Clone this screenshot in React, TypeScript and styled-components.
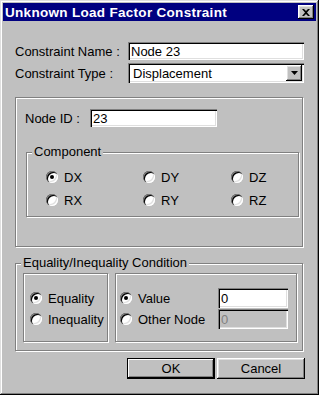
import React from 'react'
import styled, { createGlobalStyle } from 'styled-components'

const GlobalStyle = createGlobalStyle`
  html, body {
    margin: 0;
    padding: 0;
    background: #c0c0c0;
  }
  body {
    font-family: 'Liberation Sans', Arial, sans-serif;
    font-size: 13px;
    color: #000;
  }
`

const raised = `
  box-shadow: inset -1px -1px 0 #000, inset 1px 1px 0 #fff,
    inset -2px -2px 0 #808080, inset 2px 2px 0 #dfdfdf;
`

const sunken = `
  box-shadow: inset 1px 1px 0 #808080, inset 2px 2px 0 #000,
    inset -1px -1px 0 #fff, inset -2px -2px 0 #dfdfdf;
`

const etched = `
  border: 1px solid #808080;
  box-shadow: inset 1px 1px 0 #fff, 1px 1px 0 #fff;
`

const Window = styled.div`
  box-sizing: border-box;
  width: 319px;
  height: 395px;
  padding: 3px;
  background: #c0c0c0;
  box-shadow: inset -1px -1px 0 #000, inset 1px 1px 0 #dfdfdf,
    inset -2px -2px 0 #808080, inset 2px 2px 0 #fff;
  display: flex;
  flex-direction: column;
`

const TitleBar = styled.div`
  height: 18px;
  background: #000080;
  color: #fff;
  display: flex;
  align-items: center;
  padding: 0 2px;
  font-weight: bold;
  font-size: 13.5px;
  letter-spacing: 0.3px;
`

const CloseButton = styled.div`
  margin-left: auto;
  width: 16px;
  height: 14px;
  background: #c0c0c0;
  display: flex;
  align-items: center;
  justify-content: center;
  ${raised}
`

const Form = styled.div`
  padding: 21px 12px 0;
  display: flex;
  flex-direction: column;
`

const FieldGrid = styled.div`
  display: grid;
  grid-template-columns: 113px 1fr;
  row-gap: 3px;
  align-items: center;
`

const Label = styled.span`
  white-space: nowrap;
`

const TextBox = styled.input<{ $width?: number; $height?: number }>`
  box-sizing: border-box;
  width: ${(p) => (p.$width ? `${p.$width}px` : '100%')};
  height: ${(p) => p.$height ?? 18}px;
  border: none;
  outline: none;
  margin: 0;
  padding: 0 3px;
  font: inherit;
  color: #000;
  background: #fff;
  ${sunken}

  &:disabled {
    background: #c0c0c0;
    color: #808080;
  }
`

const Select = styled.div`
  box-sizing: border-box;
  height: 20px;
  background: #fff;
  display: flex;
  align-items: center;
  padding: 2px 2px 2px 5px;
  ${sunken}
`

const SelectText = styled.span`
  flex: 1;
`

const ArrowButton = styled.div`
  width: 16px;
  height: 16px;
  background: #c0c0c0;
  display: flex;
  align-items: center;
  justify-content: center;
  ${raised}
`

const Panel = styled.div`
  box-sizing: border-box;
  width: 288px;
  margin-top: 14px;
  padding: 11px 0 29px 9px;
  ${etched}
`

const NodeRow = styled.div`
  display: flex;
  align-items: center;
`

const NodeLabel = styled.span`
  width: 65px;
`

const Group = styled.div<{ $width: number }>`
  position: relative;
  box-sizing: border-box;
  width: ${(p) => p.$width}px;
  ${etched}
`

const Legend = styled.span`
  position: absolute;
  top: -8px;
  left: 5px;
  padding: 0 2px;
  line-height: 14px;
  background: #c0c0c0;
  white-space: nowrap;
`

const ComponentGroup = styled(Group)`
  margin: 25px 0 0 1px;
  padding: 17px 0 9px 19px;
  display: grid;
  grid-template-columns: 97px 88px 1fr;
  row-gap: 9px;
`

const ConditionGroup = styled(Group)`
  margin-top: 16px;
  padding: 9px 0 8px 7px;
  display: flex;
  gap: 7px;
`

const InnerBox = styled.div<{ $width: number; $padLeft: number }>`
  box-sizing: border-box;
  width: ${(p) => p.$width}px;
  height: 69px;
  padding: 14px 0 0 ${(p) => p.$padLeft}px;
  display: grid;
  grid-auto-rows: 20px;
  row-gap: 1px;
  ${etched}
`

const ValueRow = styled.div`
  display: grid;
  grid-template-columns: 98px 70px;
  align-items: center;
`

const RadioItem = styled.label`
  height: 14px;
  display: flex;
  align-items: center;
  gap: 6px;
  white-space: nowrap;
`

const RadioDot = styled.span<{ $checked?: boolean }>`
  position: relative;
  flex: none;
  width: 12px;
  height: 12px;
  border-radius: 50%;
  background: #fff;
  box-shadow: inset 1px 1px 0 #808080, inset 2px 2px 0 #000,
    inset -1px -1px 0 #fff, inset -2px -2px 0 #dfdfdf;

  &::after {
    content: '';
    display: ${(p) => (p.$checked ? 'block' : 'none')};
    position: absolute;
    left: 4px;
    top: 4px;
    width: 4px;
    height: 4px;
    border-radius: 50%;
    background: #000;
  }
`

const ButtonRow = styled.div`
  margin: 7px -1px 0 0;
  display: flex;
  justify-content: flex-end;
  gap: 2px;
`

const Button = styled.button<{ $default?: boolean }>`
  box-sizing: border-box;
  width: 88px;
  height: 21px;
  margin: 0;
  padding: 0;
  border: none;
  font: inherit;
  color: #000;
  background: #c0c0c0;
  box-shadow: ${(p) =>
    p.$default
      ? 'inset 0 0 0 1px #000, inset -2px -2px 0 #000, inset 2px 2px 0 #fff, inset -3px -3px 0 #808080'
      : 'inset -1px -1px 0 #000, inset 1px 1px 0 #fff, inset -2px -2px 0 #808080, inset 2px 2px 0 #dfdfdf'};
`

const Radio = ({ label, checked }: { label: string; checked?: boolean }) => (
  <RadioItem>
    <RadioDot $checked={checked} />
    {label}
  </RadioItem>
)

const components = ['DX', 'DY', 'DZ', 'RX', 'RY', 'RZ']

export default function App() {
  return (
    <>
      <GlobalStyle />
      <Window>
        <TitleBar>
          Unknown Load Factor Constraint
          <CloseButton>
            <svg width='8' height='7' viewBox='0 0 8 7'>
              <path d='M0 0h2l2 2 2-2h2L5 3.5 8 7H6L4 5 2 7H0l3-3.5z' fill='#000' />
            </svg>
          </CloseButton>
        </TitleBar>
        <Form>
          <FieldGrid>
            <Label>Constraint Name :</Label>
            <TextBox defaultValue='Node 23' />
            <Label>Constraint Type :</Label>
            <Select>
              <SelectText>Displacement</SelectText>
              <ArrowButton>
                <svg width='7' height='4' viewBox='0 0 7 4'>
                  <path d='M0 0h7L3.5 4z' fill='#000' />
                </svg>
              </ArrowButton>
            </Select>
          </FieldGrid>

          <Panel>
            <NodeRow>
              <NodeLabel>Node ID :</NodeLabel>
              <TextBox $width={127} defaultValue='23' />
            </NodeRow>
            <ComponentGroup $width={273}>
              <Legend>Component</Legend>
              {components.map((c) => (
                <Radio key={c} label={c} checked={c === 'DX'} />
              ))}
            </ComponentGroup>
          </Panel>

          <ConditionGroup $width={288}>
            <Legend>Equality/Inequality Condition</Legend>
            <InnerBox $width={85} $padLeft={6}>
              <ValueRow>
                <Radio label='Equality' checked />
              </ValueRow>
              <ValueRow>
                <Radio label='Inequality' />
              </ValueRow>
            </InnerBox>
            <InnerBox $width={182} $padLeft={4}>
              <ValueRow>
                <Radio label='Value' checked />
                <TextBox $height={20} defaultValue='0' />
              </ValueRow>
              <ValueRow>
                <Radio label='Other Node' />
                <TextBox $height={20} defaultValue='0' disabled />
              </ValueRow>
            </InnerBox>
          </ConditionGroup>

          <ButtonRow>
            <Button $default>OK</Button>
            <Button>Cancel</Button>
          </ButtonRow>
        </Form>
      </Window>
    </>
  )
}
